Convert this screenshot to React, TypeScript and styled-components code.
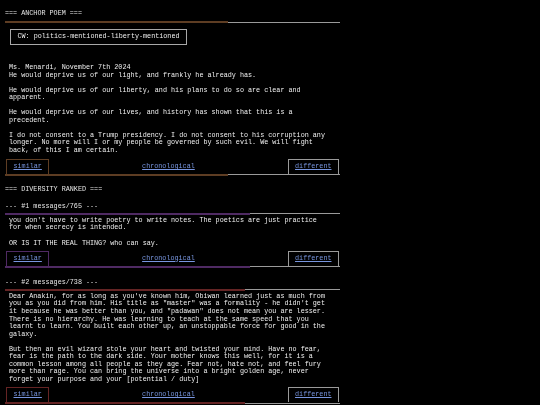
import React from "react";
import styled, { createGlobalStyle } from "styled-components";

const Global = createGlobalStyle`
  html, body { margin: 0; padding: 0; background: #000; }
  body {
    font-family: "Liberation Mono", "DejaVu Sans Mono", monospace;
    font-size: 6.75px;
    line-height: 7.55px;
    color: #f0f0f0;
    -webkit-font-smoothing: antialiased;
  }
`;

const Page = styled.main`
  display: flex;
  flex-direction: column;
  width: 335px;
  padding: 10px 0 6px 5px;
  will-change: transform;
`;

const Title = styled.div<{ $gap: number }>`
  margin-top: ${(p) => p.$gap}px;
  color: #e6e6e6;
  white-space: pre;
`;

const RuleRow = styled.div<{ $gap: number }>`
  display: flex;
  align-items: center;
  height: 2px;
  margin-top: ${(p) => p.$gap}px;
`;

const Bar = styled.div<{ $color: string }>`
  height: 2px;
  background: ${(p) => p.$color};
`;

const Line = styled.div`
  flex: 1;
  height: 1px;
  background: #9a9a9a;
`;

const CWBox = styled.div`
  align-self: flex-start;
  margin: 6px 0 0 5px;
  padding: 3.2px 6.5px;
  border: 1px solid #a8a8a8;
`;

const Body = styled.div<{ $gap: number }>`
  width: 79ch;
  margin-top: ${(p) => p.$gap}px;
  padding-left: 4px;
  white-space: pre-wrap;
`;

const ButtonRow = styled.div<{ $gap: number }>`
  display: flex;
  justify-content: space-between;
  align-items: flex-start;
  margin-top: ${(p) => p.$gap}px;
  padding: 0 1px;
`;

const Link = styled.a`
  color: #7896e0;
  text-decoration: underline;
  cursor: pointer;
`;

const BoxButton = styled.div<{ $color: string }>`
  padding: 3px 6.5px 3.5px;
  border: 1px solid ${(p) => p.$color};
  border-bottom: none;
`;

const Plain = styled.div`
  padding-top: 4px;
`;

type RowProps = { accent: string; fill: number; gap: number };

function Rule({ accent, fill, gap }: RowProps) {
  return (
    <RuleRow $gap={gap}>
      <Bar $color={accent} style={{ width: `${fill * 100}%` }} />
      <Line />
    </RuleRow>
  );
}

function Buttons({ accent, fill, gap }: RowProps) {
  return (
    <>
      <ButtonRow $gap={gap}>
        <BoxButton $color={accent}>
          <Link>similar</Link>
        </BoxButton>
        <Plain>
          <Link>chronological</Link>
        </Plain>
        <BoxButton $color="#9a9a9a">
          <Link>different</Link>
        </BoxButton>
      </ButtonRow>
      <Rule accent={accent} fill={fill} gap={0} />
    </>
  );
}

const anchorText =
  "Ms. Menardi, November 7th 2024\nHe would deprive us of our light, and frankly he already has.\n\nHe would deprive us of our liberty, and his plans to do so are clear and apparent.\n\nHe would deprive us of our lives, and history has shown that this is a precedent.\n\nI do not consent to a Trump presidency. I do not consent to his corruption any longer. No more will I or my people be governed by such evil. We will fight back, of this I am certain.";

const ranked = [
  {
    title: "--- #1 messages/765 ---",
    accent: "#4f2a63",
    fill: 0.73,
    text: "you don't have to write poetry to write notes. The poetics are just practice for when secrecy is intended.\n\nOR IS IT THE REAL THING? who can say.",
    gap: 8.5,
  },
  {
    title: "--- #2 messages/738 ---",
    accent: "#652424",
    fill: 0.715,
    text: 'Dear Anakin, for as long as you\'ve known him, Obiwan learned just as much from you as you did from him. His title as "master" was a formality - he didn\'t get it because he was better than you, and "padawan" does not mean you are lesser. There is no hierarchy. He was learning to teach at the same speed that you learnt to learn. You built each other up, an unstoppable force for good in the galaxy.\n\nBut then an evil wizard stole your heart and twisted your mind. Have no fear, fear is the path to the dark side. Your mother knows this well, for it is a common lesson among all people as they age. Fear not, hate not, and feel fury more than rage. You can bring the universe into a bright golden age, never forget your purpose and your [potential / duty]',
    gap: 11,
  },
];

export default function App() {
  const brown = "#5e3d23";
  return (
    <Page>
      <Global />
      <Title $gap={0}>=== ANCHOR POEM ===</Title>
      <Rule accent={brown} fill={0.666} gap={3.5} />
      <CWBox>CW: politics-mentioned-liberty-mentioned</CWBox>
      <Body $gap={19}>{anchorText}</Body>
      <Buttons accent={brown} fill={0.666} gap={4.4} />

      <Title $gap={10.5}>=== DIVERSITY RANKED ===</Title>
      {ranked.map((r) => (
        <React.Fragment key={r.title}>
          <Title $gap={r.gap}>{r.title}</Title>
          <Rule accent={r.accent} fill={r.fill} gap={2.8} />
          <Body $gap={2}>{r.text}</Body>
          <Buttons accent={r.accent} fill={r.fill} gap={3.5} />
        </React.Fragment>
      ))}
    </Page>
  );
}
